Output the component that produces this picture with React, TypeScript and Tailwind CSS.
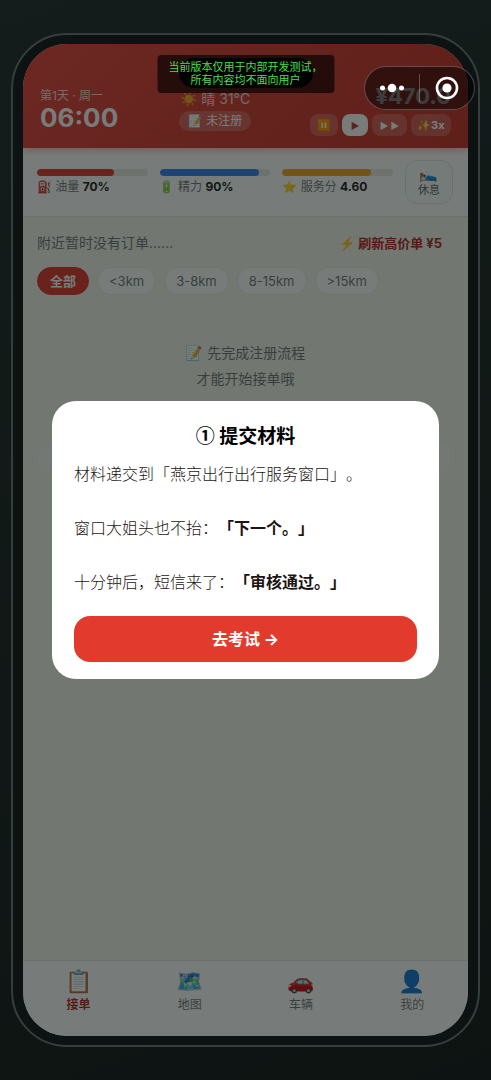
import clsx from "clsx";
import React from "react";

interface Stat {
  icon: string;
  label: string;
  value: string;
  percent: number;
  color: string;
}

const stats: Stat[] = [
  { icon: "⛽", label: "油量", value: "70%", percent: 70, color: "bg-[#e23b2e]" },
  { icon: "🔋", label: "精力", value: "90%", percent: 90, color: "bg-[#3b82f6]" },
  { icon: "⭐", label: "服务分", value: "4.60", percent: 80, color: "bg-[#f5a623]" },
];

const filters = ["全部", "<3km", "3-8km", "8-15km", ">15km"];

const tabs = [
  { icon: "📋", label: "接单" },
  { icon: "🗺️", label: "地图" },
  { icon: "🚗", label: "车辆" },
  { icon: "👤", label: "我的" },
];

const speeds = [
  { label: "⏸️", name: "暂停", style: "w-7 text-[11px]" },
  { label: "▶", name: "正常速度", style: "w-[26px] text-[9px]" },
  { label: "► ►", name: "快进", style: "w-[35px] text-[9px]" },
  { label: "✨3x", name: "三倍速", style: "w-10 text-[11px]" },
];

const Header = () => (
  <header className="relative z-10 flex h-[104px] shrink-0 items-end justify-between bg-linear-135 from-[#e8453a] to-[#c93228] pr-[17px] pb-3 pl-[17px] text-white shadow-[0_2px_8px_rgba(226,59,46,0.4)]">
    <div className="absolute top-[14px] left-1/2 h-[30px] w-[134px] -translate-x-1/2 rounded-full bg-black" />
    <div className="pb-1">
      <div className="text-xs leading-4 opacity-80">第1天 · 周一</div>
      <div className="text-[26px] leading-7 font-bold">06:00</div>
    </div>
    <div className="flex flex-col items-center gap-[2px] pb-[5px] pl-[2px]">
      <div className="text-sm leading-5 opacity-80">☀️ 晴 31°C</div>
      <div className="rounded-full bg-white/20 px-[9px] text-xs leading-5">
        📝 未注册
      </div>
    </div>
    <div className="flex flex-col items-end gap-1">
      <div className="text-[22px] leading-7 font-bold">¥470.0</div>
      <div className="flex gap-1">
        {speeds.map((s, i) => (
          <button
            key={s.name}
            aria-label={s.name}
            className={clsx(
              "h-[22px] rounded-lg leading-none font-bold whitespace-nowrap",
              s.style,
              i === 1 ? "bg-white text-[#c0392b]" : "bg-white/20 text-white"
            )}
          >
            {s.label}
          </button>
        ))}
      </div>
    </div>
  </header>
);

const StatsBar = () => (
  <section className="flex h-[69px] shrink-0 items-center gap-3 border-b border-[#e6e6dc] bg-white pr-[15px] pl-[14px]">
    {stats.map((s) => (
      <div key={s.label} className="min-w-0 flex-1">
        <div className="h-[7px] overflow-hidden rounded-full bg-[#e9e9e0]">
          <div
            className={clsx("h-full rounded-full", s.color)}
            style={{ width: `${s.percent}%` }}
          />
        </div>
        <div className="mt-[2px] text-xs leading-[18px] whitespace-nowrap text-[#777777]">
          {s.icon} {s.label} <b className="text-[#222222]">{s.value}</b>
        </div>
      </div>
    ))}
    <button className="flex h-11 w-12 flex-col items-center justify-center rounded-xl border border-[#e6e6e0] bg-[#fafcfb]">
      <span className="text-[15px] leading-4">🛌</span>
      <span className="text-[11px] leading-4 text-[#666666]">休息</span>
    </button>
  </section>
);

const OrderList = () => (
  <section className="flex-1 px-[14px] pt-[14px]">
    <div className="flex h-6 items-center justify-between pr-3 text-sm">
      <span className="text-[#777777]">附近暂时没有订单......</span>
      <button className="text-[13px] font-bold text-[#b9281f]">
        ⚡ 刷新高价单 ¥5
      </button>
    </div>
    <div className="mt-3 flex gap-2">
      {filters.map((f, i) => (
        <button
          key={f}
          className={clsx(
            "h-7 rounded-full border text-[13px] leading-none whitespace-nowrap",
            i === 0
              ? "border-[#e23b2e] bg-[#e23b2e] px-3 font-bold text-white"
              : "border-[#ecece4] bg-white px-[11px] text-[#777777]"
          )}
        >
          {f}
        </button>
      ))}
    </div>
    <div className="mt-[45px] text-center text-sm leading-[26px] text-[#777777]">
      📝 先完成注册流程
      <br />
      才能开始接单哦
    </div>
    <div className="mt-[51px] h-7 rounded-full bg-white/30" />
  </section>
);

const TabBar = () => (
  <nav className="flex h-[76px] shrink-0 border-t border-[#e6e6dc] bg-white pt-[6px]">
    {tabs.map((t, i) => (
      <a
        key={t.label}
        href="#"
        className={clsx(
          "flex flex-1 flex-col items-center text-xs",
          i === 0 ? "font-bold text-[#b9281f]" : "text-[#777777]"
        )}
      >
        <span className="text-[22px] leading-7">{t.icon}</span>
        <span className="leading-5">{t.label}</span>
      </a>
    ))}
  </nav>
);

const SubmitModal = () => (
  <div
    role="dialog"
    aria-labelledby="modal-title"
    className="mx-[52px] w-full rounded-3xl bg-white px-[22px] pt-5 pb-[17px] [text-spacing-trim:space-all]"
  >
    <h1
      id="modal-title"
      className="text-center font-['Noto_Sans_CJK_SC',sans-serif] text-[19px] leading-7 font-bold text-black"
    >
      ① 提交材料
    </h1>
    <p className="mt-3 text-base leading-[27px] font-light whitespace-pre-line text-[#1c1512]">
      {"材料递交到「燕京出行出行服务窗口」。\n\n窗口大姐头也不抬："}
      <b className="font-bold">「下一个。」</b>
      {"\n\n十分钟后，短信来了："}
      <b className="font-bold">「审核通过。」</b>
    </p>
    <button className="mt-5 h-[46px] w-full rounded-2xl bg-[#e23b2e] text-base font-bold text-white">
      去考试 →
    </button>
  </div>
);

const Capsule = () => (
  <div className="absolute top-[66px] right-4 flex h-11 w-[111px] items-center rounded-full border border-white/25 bg-black/50">
    <button aria-label="更多" className="flex flex-1 justify-center">
      <svg width="24" height="10" viewBox="0 0 24 10" fill="#fff">
        <circle cx="2.5" cy="5" r="2.5" />
        <circle cx="12" cy="5" r="4.3" />
        <circle cx="21.5" cy="5" r="2.5" />
      </svg>
    </button>
    <span className="h-7 w-px bg-white/25" />
    <button aria-label="关闭" className="flex flex-1 justify-center">
      <svg width="24" height="24" viewBox="0 0 24 24">
        <circle cx="12" cy="12" r="10" fill="none" stroke="#fff" strokeWidth="2.6" />
        <circle cx="12" cy="12" r="4.6" fill="#fff" />
      </svg>
    </button>
  </div>
);

const App: React.FC = () => {
  return (
    <div className="relative flex min-h-screen flex-col bg-linear-160 from-[#252d2b] to-[#151817] px-[11px] py-[33px] font-[Inter,'Noto_Sans_CJK_SC','Noto_Color_Emoji',sans-serif]">
      <div className="flex flex-1 flex-col rounded-[56px] border-2 border-[#6e7674] bg-[#141817] px-[10px] py-[9px]">
        <main className="flex flex-1 flex-col overflow-hidden rounded-[44px] bg-[#f4f3ec]">
          <Header />
          <StatsBar />
          <OrderList />
          <TabBar />
        </main>
      </div>
      <div className="absolute inset-0 z-20 flex items-center justify-center bg-[rgba(8,16,14,0.55)]">
        <SubmitModal />
      </div>
      <div className="absolute inset-x-0 top-0 z-30">
        <div className="absolute top-[55px] left-1/2 w-[177px] -translate-x-1/2 rounded bg-black/65 py-[6px] text-center text-[11px] leading-[13px] whitespace-nowrap text-[#4ade50]">
          当前版本仅用于内部开发测试，
          <br />
          所有内容均不面向用户
        </div>
        <Capsule />
      </div>
    </div>
  );
};

export default App;
